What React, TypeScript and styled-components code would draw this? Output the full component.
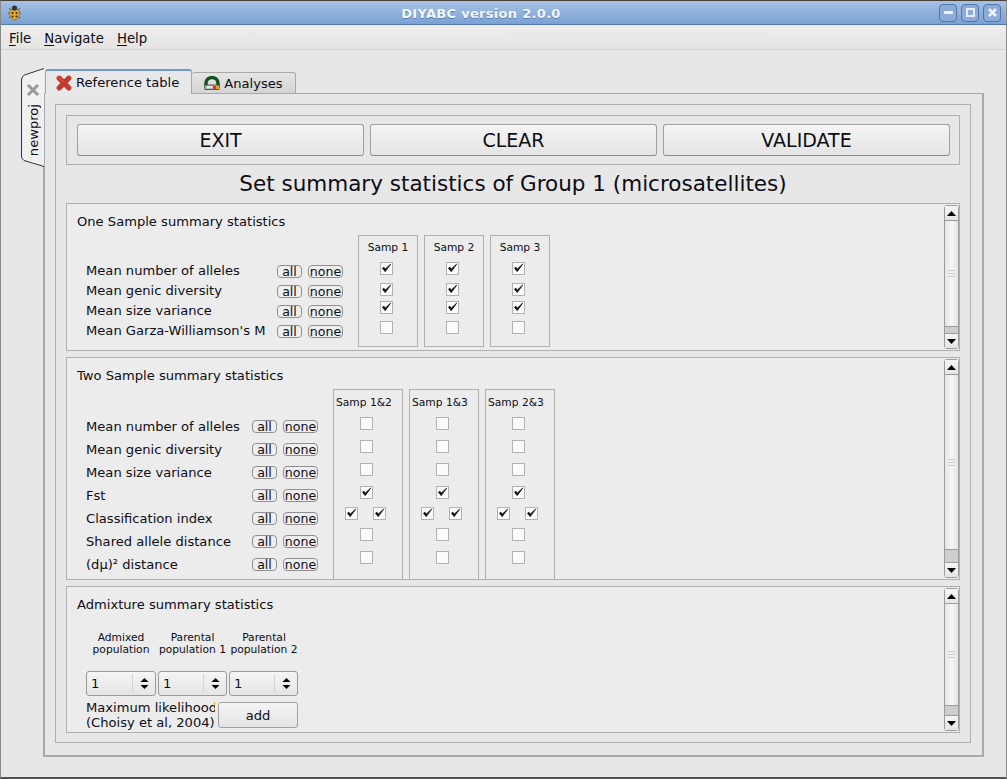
import styled, { createGlobalStyle } from "styled-components";

const GlobalStyle = createGlobalStyle`
  html, body {
    margin: 0;
    padding: 0;
    background: #e8e7e7;
  }
  body {
    width: 1007px;
    height: 779px;
    overflow: hidden;
    font-family: "DejaVu Sans", sans-serif;
    color: #0c0c14;
  }
`;

const Window = styled.div`
  width: 1007px;
  height: 779px;
  box-sizing: border-box;
  display: flex;
  flex-direction: column;
  background: #e8e7e7;
  border-top: 1px solid #4a4038;
  border-bottom: 2px solid #55514e;
  border-left: 1px solid #8a8a8a;
  border-right: 1px solid #8a8a8a;
`;

const TitleBar = styled.div`
  height: 24px;
  flex: none;
  box-sizing: border-box;
  display: flex;
  align-items: center;
  padding: 0 5px 0 6px;
  background: linear-gradient(#a6c2e6, #7ba1d3);
  border-bottom: 1px solid #4f7ab2;
`;

const TitleText = styled.div`
  flex: 1;
  text-align: center;
  font-size: 13px;
  font-weight: bold;
  letter-spacing: 0.3px;
  color: #f4f6fa;
  text-shadow: 0 1px 0 #5c7fae;
  padding: 2px 0 0 1px;
`;

const WinButtons = styled.div`
  display: flex;
  gap: 4px;
`;

const WinButton = styled.div`
  width: 18px;
  height: 18px;
  box-sizing: border-box;
  border: 1px solid #4f74a6;
  border-radius: 4px;
  background: #8cabd8;
  display: flex;
  align-items: center;
  justify-content: center;
`;

const MenuBar = styled.div`
  height: 25px;
  flex: none;
  box-sizing: border-box;
  display: flex;
  align-items: center;
  gap: 13px;
  padding: 3px 0 0 8px;
  font-size: 13.3px;
  background: linear-gradient(#eeedec, #e6e5e4);
  border-bottom: 1px solid #d4d3d2;
`;

const MenuItem = styled.span`
  u {
    text-underline-offset: 2px;
  }
`;

const Workspace = styled.div`
  flex: 1;
  display: flex;
  padding: 18px 22px 20px 20px;
  min-height: 0;
`;

const SideTab = styled.div`
  width: 23px;
  height: 99px;
  flex: none;
  box-sizing: border-box;
  margin-right: -1px;
  position: relative;
  z-index: 2;
  display: flex;
  flex-direction: column;
  align-items: center;
  padding: 15px 0 0 1px;
  gap: 7px;
`;

const SideShape = styled.svg`
  position: absolute;
  top: 0;
  left: 0;
  z-index: -1;
`;

const SideLabel = styled.span`
  writing-mode: vertical-rl;
  transform: rotate(180deg);
  font-size: 13.1px;
`;

const TabWidget = styled.div`
  flex: 1;
  display: flex;
  flex-direction: column;
  min-width: 0;
`;

const TabStrip = styled.div`
  display: flex;
  align-items: flex-end;
  height: 26px;
  padding-left: 2px;
  position: relative;
  z-index: 1;
  margin-bottom: -1px;
`;

const Tab = styled.div<{ $active?: boolean }>`
  height: ${(p) => (p.$active ? 25 : 22)}px;
  box-sizing: border-box;
  display: flex;
  align-items: center;
  gap: 4px;
  padding: 0 12px 0 ${(p) => (p.$active ? 10 : 12)}px;
  font-size: 13.1px;
  border: 1px solid #a8a8a8;
  border-left: ${(p) => (p.$active ? "1px solid #a8a8a8" : "none")};
  border-top: ${(p) => (p.$active ? "2px solid #6f9ad2" : "1px solid #a8a8a8")};
  border-bottom: ${(p) => (p.$active ? "none" : "1px solid #a8a8a8")};
  border-radius: 3px 3px 0 0;
  background: ${(p) => (p.$active ? "#e9e8e8" : "linear-gradient(#e6e5e5, #d5d4d4)")};
`;

const TabPane = styled.div`
  flex: 1;
  box-sizing: border-box;
  border: 2px solid #a9a9a9;
  border-top-width: 1px;
  padding: 10px 11px 12px 10px;
  display: flex;
  min-height: 0;
`;

const InnerFrame = styled.div`
  flex: 1;
  box-sizing: border-box;
  border: 1px solid #b0b0b0;
  padding: 10px 10px 9px 10px;
  display: flex;
  flex-direction: column;
  min-width: 0;
`;

const ActionFrame = styled.div`
  height: 50px;
  flex: none;
  box-sizing: border-box;
  border: 1px solid #b0b0b0;
  display: flex;
  align-items: center;
  gap: 6px;
  padding: 0 9px 0 10px;
`;

const ActionButton = styled.div`
  flex: 1;
  height: 32px;
  box-sizing: border-box;
  border: 1px solid #a0a0a0;
  border-bottom-color: #8c8c8c;
  border-radius: 3px;
  background: linear-gradient(#f6f5f5, #e5e4e4);
  display: flex;
  align-items: center;
  justify-content: center;
  font-size: 19px;
  padding-bottom: 1px;
`;

const PageTitle = styled.div`
  height: 38px;
  flex: none;
  box-sizing: border-box;
  display: flex;
  align-items: center;
  justify-content: center;
  font-size: 21.5px;
  padding-bottom: 2px;
`;

const Section = styled.section<{ $height: number }>`
  height: ${(p) => p.$height}px;
  flex: none;
  box-sizing: border-box;
  border: 1px solid #b0b0b0;
  background: #edecec;
  margin-bottom: 6px;
  display: flex;
  overflow: hidden;
  &:last-child {
    margin-bottom: 0;
  }
`;

const SectionBody = styled.div`
  flex: 1;
  min-width: 0;
  padding: 10px 0 0 10px;
  overflow: hidden;
`;

const SectionTitle = styled.div`
  font-size: 13.1px;
  line-height: 16px;
`;

const StatGrid = styled.div<{ $labelWidth: number }>`
  display: grid;
  grid-template-columns: ${(p) => p.$labelWidth}px max-content max-content max-content max-content;
  margin: 5px 0 0 9px;
`;

const LabelCol = styled.div<{ $top: number; $pitch: number }>`
  padding-top: ${(p) => p.$top}px;
  display: grid;
  grid-auto-rows: ${(p) => p.$pitch}px;
  align-items: center;
  font-size: 13.1px;
  white-space: nowrap;
`;

const ButtonCol = styled.div<{ $top: number; $pitch: number }>`
  padding-top: ${(p) => p.$top}px;
  margin-right: 15px;
  display: grid;
  grid-auto-rows: ${(p) => p.$pitch}px;
  align-items: center;
`;

const PairRow = styled.div`
  display: flex;
  gap: 6px;
`;

const MiniButton = styled.div<{ $w: number }>`
  width: ${(p) => p.$w}px;
  height: 13px;
  box-sizing: border-box;
  border: 1px solid #8f8f8f;
  border-radius: 4px;
  background: #f0efef;
  display: flex;
  align-items: center;
  justify-content: center;
  font-size: 12.6px;
  line-height: 11px;
`;

const SampleCols = styled.div`
  display: flex;
  gap: 6px;
`;

const SampleCol = styled.div<{ $width: number; $height: number; $pad: number }>`
  width: ${(p) => p.$width}px;
  height: ${(p) => p.$height}px;
  flex: none;
  box-sizing: border-box;
  border: 1px solid #b0b0b0;
  padding-top: ${(p) => p.$pad}px;
  display: flex;
  flex-direction: column;
  align-items: center;
`;

const SampleHead = styled.div<{ $left?: boolean }>`
  font-size: 10.7px;
  line-height: 13px;
  margin-bottom: 8px;
  white-space: nowrap;
  align-self: ${(p) => (p.$left ? "flex-start" : "center")};
  padding-left: ${(p) => (p.$left ? 2 : 0)}px;
`;

const CheckSlot = styled.div<{ $h: number; $pair?: boolean }>`
  height: ${(p) => p.$h}px;
  flex: none;
  display: flex;
  gap: ${(p) => (p.$pair ? 15 : 0)}px;
  margin-right: ${(p) => (p.$pair ? 5 : 3)}px;
`;

const Box = styled.div`
  width: 13px;
  height: 13px;
  box-sizing: border-box;
  border: 1px solid #b2b2b2;
  background: #fbfbfb;
  display: flex;
  align-items: center;
  justify-content: center;
`;

const Scrollbar = styled.div`
  width: 15px;
  flex: none;
  box-sizing: border-box;
  margin: 1px 0;
  border: 1px solid #9c9c9c;
  border-radius: 3px;
  display: flex;
  flex-direction: column;
  background: #cfcece;
`;

const ScrollEnd = styled.div<{ $down?: boolean }>`
  height: 14px;
  flex: none;
  background: linear-gradient(#f6f5f5, #e6e5e5);
  border-${(p) => (p.$down ? "top" : "bottom")}: 1px solid #9c9c9c;
  display: flex;
  align-items: center;
  justify-content: center;
`;

const ScrollThumb = styled.div<{ $gutter: number }>`
  flex: 1;
  margin-bottom: ${(p) => p.$gutter}px;
  background: linear-gradient(90deg, #e6e5e5, #f7f6f6 50%, #e6e5e5);
  border-bottom: 1px solid #9c9c9c;
  display: flex;
  flex-direction: column;
  align-items: center;
  justify-content: center;
  gap: 2px;
`;

const Grip = styled.div`
  width: 7px;
  height: 1px;
  background: #cdcccc;
`;

const AdmixHeads = styled.div`
  display: grid;
  grid-template-columns: 70px 73px 70px;
  margin: 19px 0 0 9px;
  width: 213px;
`;

const AdmixHead = styled.div`
  font-size: 10.7px;
  line-height: 12px;
  text-align: center;
  white-space: nowrap;
`;

const SpinRow = styled.div`
  display: flex;
  gap: 2px;
  margin: 15px 0 0 9px;
`;

const Spin = styled.div<{ $w: number }>`
  width: ${(p) => p.$w}px;
  height: 25px;
  box-sizing: border-box;
  border: 1px solid #9a9a9a;
  border-radius: 3px;
  background: linear-gradient(#f6f5f5, #e6e5e5);
  display: flex;
  align-items: center;
  font-size: 13.1px;
`;

const SpinValue = styled.span`
  flex: 1;
  padding-left: 4px;
`;

const SpinArrows = styled.div`
  width: 22px;
  height: 19px;
  border-left: 1px solid #d6d5d5;
  display: flex;
  align-items: center;
  justify-content: center;
`;

const LikelihoodRow = styled.div`
  display: flex;
  align-items: flex-start;
  margin: 6px 0 0 9px;
`;

const Likelihood = styled.div`
  width: 129px;
  margin: -2px 3px 0 0;
  flex: none;
  overflow: hidden;
  white-space: nowrap;
  font-size: 13.1px;
  line-height: 15px;
`;

const AddButton = styled.div`
  width: 80px;
  height: 26px;
  box-sizing: border-box;
  border: 1px solid #a0a0a0;
  border-radius: 3px;
  background: linear-gradient(#f6f5f5, #e5e4e4);
  display: flex;
  align-items: center;
  justify-content: center;
  font-size: 13.1px;
`;

const Tick = () => (
  <svg width="11" height="11" viewBox="0 0 11 11">
    <path d="M1.5 5.2 L4.2 8.6 L9.6 1.2 L4.4 6 L2.8 4.2 Z" fill="#111" stroke="#111" strokeWidth="0.9" strokeLinejoin="round" />
  </svg>
);

const Check = ({ on }: { on?: boolean }) => <Box>{on && <Tick />}</Box>;

const Arrow = ({ down }: { down?: boolean }) => (
  <svg width="9" height="5" viewBox="0 0 9 5">
    <path d={down ? "M0 0H9L4.5 5Z" : "M0 5H9L4.5 0Z"} fill="#000" />
  </svg>
);

const BugIcon = () => (
  <svg width="15" height="17" viewBox="0 0 15 17">
    <path d="M2 4L4 6M13 4L11 6M1 9H3M14 9H12M2 14L4 12M13 14L11 12" stroke="#555" strokeWidth="1" />
    <ellipse cx="7.5" cy="10" rx="5" ry="6" fill="#d9aa32" stroke="#8a6a20" strokeWidth="0.7" />
    <circle cx="7.5" cy="4" r="2.6" fill="#333" />
    <circle cx="5.5" cy="9" r="1" fill="#3a2c10" />
    <circle cx="9.5" cy="9" r="1" fill="#3a2c10" />
    <circle cx="5.5" cy="12.5" r="1" fill="#3a2c10" />
    <circle cx="9.5" cy="12.5" r="1" fill="#3a2c10" />
  </svg>
);

const RedCross = () => (
  <svg width="16" height="16" viewBox="0 0 16 16">
    <path d="M3.2 3.2L12.8 12.8M12.8 3.2L3.2 12.8" stroke="#c4392e" strokeWidth="5.2" strokeLinecap="round" />
    <path d="M2.5 2.5L8 7" stroke="#de6a5c" strokeWidth="1" />
  </svg>
);

const DiskIcon = () => (
  <svg width="16" height="14" viewBox="0 0 16 14">
    <path d="M2 9.5V7A6 5.5 0 0 1 14 7V9.5" fill="none" stroke="#15501f" strokeWidth="3.4" />
    <path d="M0.5 9H15.5L15 13.5H1Z" fill="#bdbdbd" stroke="#3a3a3a" strokeWidth="0.8" />
    <path d="M3 11H8" stroke="#fff" strokeWidth="1.2" />
    <rect x="9" y="10" width="3" height="3" fill="#d33a2c" />
    <rect x="12" y="10" width="3" height="3" fill="#d9a52c" />
  </svg>
);

const GreyCross = () => (
  <svg width="14" height="14" viewBox="0 0 14 14">
    <path d="M2 2L12 12M12 2L2 12" stroke="#9a9a9a" strokeWidth="3" />
  </svg>
);

const ScrollBarBlock = ({ gutter }: { gutter: number }) => (
  <Scrollbar>
    <ScrollEnd>
      <Arrow />
    </ScrollEnd>
    <ScrollThumb $gutter={gutter}>
      <Grip />
      <Grip />
      <Grip />
    </ScrollThumb>
    <ScrollEnd $down>
      <Arrow down />
    </ScrollEnd>
  </Scrollbar>
);

const oneLabels = ["Mean number of alleles", "Mean genic diversity", "Mean size variance", "Mean Garza-Williamson's M"];
const oneSamples = ["Samp 1", "Samp 2", "Samp 3"];
const oneSlots = [21, 18, 20, 13];

const twoLabels = [
  "Mean number of alleles",
  "Mean genic diversity",
  "Mean size variance",
  "Fst",
  "Classification index",
  "Shared allele distance",
  "(dμ)² distance",
];
const twoSamples = ["Samp 1&2", "Samp 1&3", "Samp 2&3"];
const twoSlots = [23, 23, 23, 21, 21, 23, 13];

const AllNone = ({ count, top, pitch }: { count: number; top: number; pitch: number }) => (
  <ButtonCol $top={top} $pitch={pitch}>
    {Array.from({ length: count }, (_, i) => (
      <PairRow key={i}>
        <MiniButton $w={25}>all</MiniButton>
        <MiniButton $w={35}>none</MiniButton>
      </PairRow>
    ))}
  </ButtonCol>
);

const App = () => {
  return (
    <>
      <GlobalStyle />
      <Window>
        <TitleBar>
          <BugIcon />
          <TitleText>DIYABC version 2.0.0</TitleText>
          <WinButtons>
            <WinButton>
              <svg width="9" height="3" viewBox="0 0 9 3">
                <rect width="9" height="3" rx="1" fill="#eef3fa" />
              </svg>
            </WinButton>
            <WinButton>
              <svg width="9" height="9" viewBox="0 0 9 9">
                <rect x="1" y="1" width="7" height="7" fill="none" stroke="#e6edf7" strokeWidth="2" />
              </svg>
            </WinButton>
            <WinButton>
              <svg width="11" height="11" viewBox="0 0 11 11">
                <path d="M2 2L9 9M9 2L2 9" stroke="#eef3fa" strokeWidth="2.6" />
              </svg>
            </WinButton>
          </WinButtons>
        </TitleBar>

        <MenuBar>
          <MenuItem>
            <u>F</u>ile
          </MenuItem>
          <MenuItem>
            <u>N</u>avigate
          </MenuItem>
          <MenuItem>
            <u>H</u>elp
          </MenuItem>
        </MenuBar>

        <Workspace>
          <SideTab>
            <SideShape width="23" height="99" viewBox="0 0 23 99">
              <path
                d="M23 0.5L3.5 7Q0.5 8.5 0.5 12V88Q0.5 91 3 92.5L23 98.5"
                fill="#f1f0f0"
                stroke="#333"
                strokeWidth="1"
              />
            </SideShape>
            <GreyCross />
            <SideLabel>newproj</SideLabel>
          </SideTab>
          <TabWidget>
            <TabStrip>
              <Tab $active>
                <RedCross />
                Reference table
              </Tab>
              <Tab>
                <DiskIcon />
                Analyses
              </Tab>
            </TabStrip>
            <TabPane>
              <InnerFrame>
                <ActionFrame>
                  <ActionButton>EXIT</ActionButton>
                  <ActionButton>CLEAR</ActionButton>
                  <ActionButton>VALIDATE</ActionButton>
                </ActionFrame>
                <PageTitle>Set summary statistics of Group 1 (microsatellites)</PageTitle>

                <Section $height={148}>
                  <SectionBody>
                    <SectionTitle>One Sample summary statistics</SectionTitle>
                    <StatGrid $labelWidth={191}>
                      <LabelCol $top={25} $pitch={20}>
                        {oneLabels.map((label) => (
                          <div key={label}>{label}</div>
                        ))}
                      </LabelCol>
                      <AllNone count={4} top={26} pitch={20} />
                      <SampleCols>
                        {oneSamples.map((s) => (
                          <SampleCol key={s} $width={60} $height={112} $pad={5}>
                            <SampleHead>{s}</SampleHead>
                            {oneSlots.map((h, i) => (
                              <CheckSlot key={i} $h={h}>
                                <Check on={i < 3} />
                              </CheckSlot>
                            ))}
                          </SampleCol>
                        ))}
                      </SampleCols>
                    </StatGrid>
                  </SectionBody>
                  <ScrollBarBlock gutter={6} />
                </Section>

                <Section $height={223}>
                  <SectionBody>
                    <SectionTitle>Two Sample summary statistics</SectionTitle>
                    <StatGrid $labelWidth={166}>
                      <LabelCol $top={26} $pitch={23}>
                        {twoLabels.map((label) => (
                          <div key={label}>{label}</div>
                        ))}
                      </LabelCol>
                      <AllNone count={7} top={26} pitch={23} />
                      <SampleCols>
                        {twoSamples.map((s) => (
                          <SampleCol key={s} $width={70} $height={200} $pad={6}>
                            <SampleHead $left>{s}</SampleHead>
                            {twoSlots.map((h, i) =>
                              i === 4 ? (
                                <CheckSlot key={i} $h={h} $pair>
                                  <Check on />
                                  <Check on />
                                </CheckSlot>
                              ) : (
                                <CheckSlot key={i} $h={h}>
                                  <Check on={i === 3} />
                                </CheckSlot>
                              ),
                            )}
                          </SampleCol>
                        ))}
                      </SampleCols>
                    </StatGrid>
                  </SectionBody>
                  <ScrollBarBlock gutter={12} />
                </Section>

                <Section $height={147}>
                  <SectionBody>
                    <SectionTitle>Admixture summary statistics</SectionTitle>
                    <AdmixHeads>
                      <AdmixHead>
                        Admixed
                        <br />
                        population
                      </AdmixHead>
                      <AdmixHead>
                        Parental
                        <br />
                        population 1
                      </AdmixHead>
                      <AdmixHead>
                        Parental
                        <br />
                        population 2
                      </AdmixHead>
                    </AdmixHeads>
                    <SpinRow>
                      {[70, 69, 69].map((w, i) => (
                        <Spin key={i} $w={w}>
                          <SpinValue>1</SpinValue>
                          <SpinArrows>
                            <svg width="9" height="13" viewBox="0 0 9 13">
                              <path d="M0.5 5H8.5L4.5 1ZM0.5 8H8.5L4.5 12Z" fill="#000" />
                            </svg>
                          </SpinArrows>
                        </Spin>
                      ))}
                    </SpinRow>
                    <LikelihoodRow>
                      <Likelihood>
                        Maximum likelihood
                        <br />
                        (Choisy et al, 2004)
                      </Likelihood>
                      <AddButton>add</AddButton>
                    </LikelihoodRow>
                  </SectionBody>
                  <ScrollBarBlock gutter={9} />
                </Section>
              </InnerFrame>
            </TabPane>
          </TabWidget>
        </Workspace>
      </Window>
    </>
  );
};

export default App;
